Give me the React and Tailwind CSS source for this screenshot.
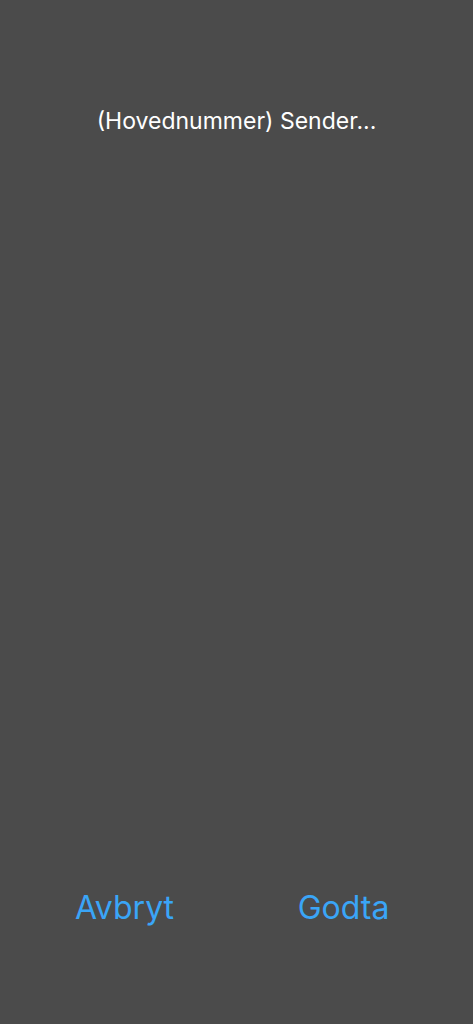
export default function App() {
  return (
    <div className="w-[473px] h-[1024px] bg-[#4b4b4b] flex flex-col" style={{ fontFamily: 'Inter, "Noto Sans", sans-serif' }}>
      <div className="pt-[105px] text-center text-white text-[23px] leading-[32px]">(Hovednummer) Sender...</div>
      <div className="flex-1" />
      <div className="grid grid-cols-2 pl-[15px] pr-[20px] pb-[96px] text-[#3aa5f7] text-[32px] leading-[40px]">
        <div className="text-center">Avbryt</div>
        <div className="text-center">Godta</div>
      </div>
    </div>
  );
}
